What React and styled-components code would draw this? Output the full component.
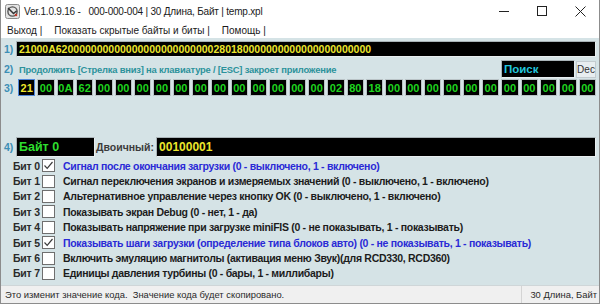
import React from 'react';
import styled, { createGlobalStyle } from 'styled-components';

const GlobalStyle = createGlobalStyle`
  html, body {
    margin: 0;
    padding: 0;
    background: #ffffff;
  }
  * {
    box-sizing: border-box;
  }
`;

const Window = styled.div`
  width: 600px;
  height: 304px;
  display: flex;
  flex-direction: column;
  background: #d5e3e6;
  border: 1px solid #8c8c8c;
  border-top: none;
  overflow: hidden;
  font-family: "Liberation Sans", Arial, sans-serif;
`;

const TitleBar = styled.div`
  height: 22px;
  display: flex;
  align-items: center;
  background: #ffffff;
  padding-left: 4px;
`;

const TitleText = styled.span`
  margin-left: 4px;
  font-size: 10px;
  letter-spacing: -0.2px;
  color: #1a1a1a;
  white-space: pre;
  flex: 1;
`;

const WinButtons = styled.div`
  display: flex;
  height: 22px;
`;

const WinButton = styled.div`
  width: 38px;
  display: flex;
  align-items: center;
  justify-content: center;
`;

const MenuBar = styled.div`
  height: 16px;
  display: flex;
  align-items: center;
  background: #ffffff;
  padding-left: 6px;
  gap: 12px;
  font-size: 10px;
  color: #1a1a1a;
  white-space: pre;
`;

const Client = styled.div`
  flex: 1;
  display: flex;
  flex-direction: column;
  padding: 3px 3px 0 2px;
`;

const Row = styled.div`
  display: flex;
  align-items: center;
  height: ${p => p.h}px;
  margin-top: ${p => p.mt || 0}px;
`;

const Num = styled.span`
  width: 13px;
  flex: none;
  padding-left: 1px;
  font-size: 10.5px;
  font-weight: bold;
  color: #3d8fb5;
`;

const DarkBox = styled.div`
  height: 100%;
  display: flex;
  align-items: center;
  background: #000000;
  border: 1px solid #a9b3b7;
  border-right-color: #e8eef0;
  border-bottom-color: #e8eef0;
  padding-left: 2px;
  font-weight: bold;
  font-size: ${p => p.fs || 11}px;
  color: ${p => p.color || '#ece62c'};
  flex: ${p => (p.w ? 'none' : 1)};
  width: ${p => (p.w ? p.w + 'px' : 'auto')};
  white-space: nowrap;
  overflow: hidden;
`;

const Hint = styled.span`
  flex: 1;
  padding-left: 3px;
  font-size: 9.4px;
  letter-spacing: -0.2px;
  font-weight: bold;
  color: #2c929b;
  white-space: nowrap;
`;

const DecButton = styled.div`
  width: 20px;
  height: 17px;
  margin-left: 1px;
  display: flex;
  align-items: center;
  justify-content: center;
  background: #e8eef0;
  border: 1px solid #c4ccd0;
  font-size: 10px;
  color: #333333;
`;

const HexGrid = styled.div`
  flex: 1;
  height: 100%;
  display: grid;
  grid-template-columns: repeat(30, 1fr);
  column-gap: 2px;
  margin-left: 2px;
`;

const HexCell = styled.div`
  display: flex;
  align-items: center;
  justify-content: center;
  background: #000000;
  border: 1px solid ${p => (p.active ? '#4f86d8' : '#b9c3c6')};
  font-size: 11px;
  font-weight: bold;
  color: ${p => (p.active ? '#eee52a' : '#1fd41f')};
`;

const FieldLabel = styled.span`
  padding: 0 2px 0 1px;
  font-size: 10.5px;
  font-weight: bold;
  color: #3c3c3c;
  white-space: nowrap;
`;

const BitList = styled.div`
  display: flex;
  flex-direction: column;
  padding-left: 10px;
  margin-top: 1px;
`;

const BitRow = styled.div`
  display: flex;
  align-items: center;
  height: 15.4px;
`;

const BitName = styled.span`
  width: 29px;
  flex: none;
  font-size: 10.5px;
  letter-spacing: -0.2px;
  font-weight: bold;
  color: #2b2b2b;
  white-space: nowrap;
`;

const Check = styled.div`
  width: 13px;
  height: 13px;
  flex: none;
  background: #ffffff;
  border: 1px solid #6f6f6f;
  display: flex;
  align-items: center;
  justify-content: center;
`;

const BitText = styled.span`
  margin-left: 8px;
  font-size: 10.5px;
  letter-spacing: -0.3px;
  font-weight: bold;
  white-space: nowrap;
  color: ${p => (p.on ? '#2a2ad6' : '#1c1c1c')};
`;

const StatusBar = styled.div`
  height: 18px;
  display: flex;
  align-items: center;
  background: #f0f0f0;
  border-top: 1px solid #cfd6d8;
  font-size: 9.4px;
  color: #2a2a2a;
`;

const StatusMain = styled.span`
  flex: 1;
  padding-left: 4px;
  white-space: pre;
`;

const StatusPane = styled.span`
  height: 100%;
  display: flex;
  align-items: center;
  padding: 0 2px 0 8px;
  border-left: 1px solid #d4d4d4;
  white-space: nowrap;
`;

const hex = ['21', '00', '0A', '62', ...Array(12).fill('00'), '02', '80', '18', ...Array(11).fill('00')];

const bits = [
  ['Сигнал после окончания загрузки (0 - выключено, 1 - включено)', true],
  ['Сигнал переключения экранов и измеряемых значений (0 - выключено, 1 - включено)', false],
  ['Альтернативное управление через кнопку OK (0 - выключено, 1 - включено)', false],
  ['Показывать экран Debug (0 - нет, 1 - да)', false],
  ['Показывать напряжение при загрузке miniFIS (0 - не показывать, 1 - показывать)', false],
  ['Показывать шаги загрузки (определение типа блоков авто) (0 - не показывать, 1 - показывать)', true],
  ['Включить эмуляцию магнитолы (активация меню Звук)(для RCD330, RCD360)', false],
  ['Единицы давления турбины (0 - бары, 1 - миллибары)', false],
];

function AppIcon() {
  return (
    <svg width="15" height="15" viewBox="0 0 15 15">
      <rect x="0.5" y="0.5" width="14" height="14" rx="2" fill="#e4e4e4" stroke="#8a8a8a" />
      <circle cx="7.5" cy="7.5" r="4.6" fill="none" stroke="#555" strokeWidth="1.4" />
      <path d="M3 4 L8.5 9.5 L11.5 7" fill="none" stroke="#333" strokeWidth="1.5" />
      <circle cx="11" cy="11" r="1.3" fill="#c0392b" />
    </svg>
  );
}

function App() {
  return (
    <Window>
      <GlobalStyle />
      <TitleBar>
        <AppIcon />
        <TitleText>Ver.1.0.9.16 -   000-000-004 | 30 Длина, Байт | temp.xpl</TitleText>
        <WinButtons>
          <WinButton>
            <svg width="10" height="10" viewBox="0 0 10 10">
              <path d="M0 5.5 H10" stroke="#222" strokeWidth="1" />
            </svg>
          </WinButton>
          <WinButton>
            <svg width="10" height="10" viewBox="0 0 10 10">
              <rect x="0.5" y="0.5" width="9" height="9" fill="none" stroke="#222" />
            </svg>
          </WinButton>
          <WinButton>
            <svg width="11" height="11" viewBox="0 0 11 11">
              <path d="M0.5 0.5 L10.5 10.5 M10.5 0.5 L0.5 10.5" stroke="#222" strokeWidth="1" />
            </svg>
          </WinButton>
        </WinButtons>
      </TitleBar>
      <MenuBar>
        <span>Выход |</span>
        <span>Показать скрытые байты и биты |</span>
        <span>Помощь |</span>
      </MenuBar>
      <Client>
        <Row h={16}>
          <Num>1)</Num>
          <DarkBox fs={10.5}>{hex.join('')}</DarkBox>
        </Row>
        <Row h={18} mt={3}>
          <Num>2)</Num>
          <Hint>Продолжить [Стрелка вниз] на клавиатуре / [ESC] закроет приложение</Hint>
          <DarkBox w={74} fs={11.5} color="#22c6dc">Поиск</DarkBox>
          <DecButton>Dec</DecButton>
        </Row>
        <Row h={17} mt={1}>
          <Num>3)</Num>
          <HexGrid>
            {hex.map((v, i) => (
              <HexCell key={i} active={i === 0}>{v}</HexCell>
            ))}
          </HexGrid>
        </Row>
        <Row h={20} mt={41}>
          <Num>4)</Num>
          <DarkBox w={79} fs={12.5} color="#2ede2e">Байт 0</DarkBox>
          <FieldLabel>Двоичный:</FieldLabel>
          <DarkBox fs={12}>00100001</DarkBox>
        </Row>
        <BitList>
          {bits.map(([text, on], i) => (
            <BitRow key={i}>
              <BitName>Бит {i}</BitName>
              <Check>
                {on && (
                  <svg width="11" height="11" viewBox="0 0 11 11">
                    <path d="M1.5 5.5 L4.2 8.3 L9.5 2" fill="none" stroke="#3b3b3b" strokeWidth="1.2" />
                  </svg>
                )}
              </Check>
              <BitText on={on ? 1 : 0}>{text}</BitText>
            </BitRow>
          ))}
        </BitList>
      </Client>
      <StatusBar>
        <StatusMain>Это изменит значение кода.  Значение кода будет скопировано.</StatusMain>
        <StatusPane>30 Длина, Байт</StatusPane>
      </StatusBar>
    </Window>
  );
}

export default App;
